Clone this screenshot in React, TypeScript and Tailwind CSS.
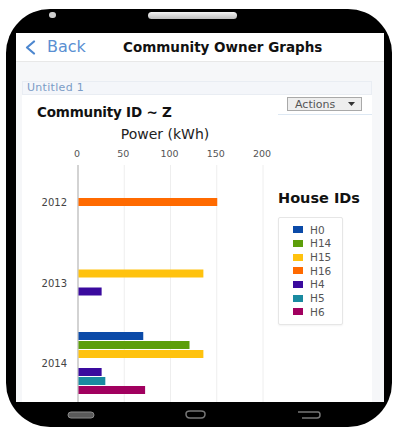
import React from "react";

const series = [
  { id: "H0", color: "#0b4aa8" },
  { id: "H14", color: "#5c9e0a" },
  { id: "H15", color: "#ffc20e" },
  { id: "H16", color: "#ff6a00" },
  { id: "H4", color: "#3a0a9e" },
  { id: "H5", color: "#1a8aa0" },
  { id: "H6", color: "#a1005f" },
];

// values per year, in series order
const data: { year: string; values: number[] }[] = [
  { year: "2012", values: [0, 0, 0, 150, 0, 0, 0] },
  { year: "2013", values: [0, 0, 135, 0, 25, 0, 0] },
  { year: "2014", values: [70, 120, 135, 0, 25, 29, 72] },
];

const X0 = 56;
const SCALE = 0.925;
const GROUP_TOP = 46;
const GROUP_STEP = 80.5;
const SLOT = 9;

function Chart() {
  const ticks = [0, 50, 100, 150, 200];
  return (
    <svg width="248" height="277" className="block shrink-0 overflow-visible" style={{ fontFamily: "'DejaVu Sans', sans-serif" }}>
      <text x="143" y="14" textAnchor="middle" fontSize="14" fill="#222">
        Power (kWh)
      </text>
      {ticks.map((t) => {
        const x = X0 + t * SCALE;
        return (
          <g key={t}>
            <text x={x - 1} y="32" textAnchor="middle" fontSize="9.5" fill="#555">
              {t}
            </text>
            {t > 0 && <line x1={x} y1="40" x2={x} y2="277" stroke="#eeeeee" strokeWidth="1" />}
          </g>
        );
      })}
      <line x1={X0} y1="40" x2={X0} y2="277" stroke="#c4c4c4" strokeWidth="1.5" />
      {data.map((d, gi) => {
        const top = GROUP_TOP + gi * GROUP_STEP;
        return (
          <g key={d.year}>
            <text x="45" y={top + 35} textAnchor="end" fontSize="10" fill="#444">
              {d.year}
            </text>
            {d.values.map((v, si) =>
              v > 0 ? (
                <rect
                  key={si}
                  x={X0 + 0.5}
                  y={top + si * SLOT}
                  width={v * SCALE}
                  height={8}
                  fill={series[si].color}
                />
              ) : null
            )}
          </g>
        );
      })}
    </svg>
  );
}

function Legend() {
  return (
    <div className="flex flex-col pt-[60px]">
      <div className="bg-white h-[27px] pl-[8px] mr-[-12px] flex items-center text-[14.5px] font-bold text-[#111]">
        House IDs
      </div>
      <div className="ml-[8px] mt-[5px] w-[65px] border border-[#e6e6e6] rounded-[2px] bg-white py-[5px] shadow-[0_1px_2px_rgba(0,0,0,0.05)]">
        {series.map((s) => (
          <div key={s.id} className="h-[13.7px] flex items-center pl-[14px] gap-[7px]">
            <span className="w-[10px] h-[7px] shrink-0" style={{ backgroundColor: s.color }} />
            <span className="text-[10.5px] text-[#555] leading-none">{s.id}</span>
          </div>
        ))}
      </div>
    </div>
  );
}

export default function App() {
  return (
    <div className="w-[411px] h-[435px] bg-white overflow-hidden" style={{ fontFamily: "'DejaVu Sans', sans-serif" }}>
      <div className="relative ml-[6px] mt-[9px] w-[386px] h-[418px] rounded-[44px] bg-black pt-[24px] pl-[10px] pr-[8px] pb-[25px]">
        {/* camera + speaker */}
        <span className="absolute left-[43px] top-[3px] w-[7px] h-[6px] rounded-full bg-[#cfcfcf]" />
        <span className="absolute left-[142px] top-[3px] w-[89px] h-[7px] rounded-full bg-gradient-to-b from-[#f4f4f4] to-[#bdbdbd]" />

        <div className="w-[368px] h-[369px] bg-[#f6f7f9] overflow-hidden flex flex-col">
          <div className="h-[29px] shrink-0 bg-white border-b border-[#e8e8e8] flex items-center">
            <div className="flex items-center pl-[8px] gap-[11px] w-[107px]">
              <svg width="12" height="15" viewBox="0 0 12 15">
                <path d="M10 1.5 L3 7.5 L10 13.5" fill="none" stroke="#4d87cf" strokeWidth="2.2" strokeLinecap="round" strokeLinejoin="round" />
              </svg>
              <span className="text-[16px] text-[#5a8fd2]">Back</span>
            </div>
            <span className="text-[13.5px] font-bold text-[#111]">Community Owner Graphs</span>
          </div>

          <div className="flex-1 pt-[19px] pl-[6px] pr-[12px]">
            <div className="h-[14px] bg-[#f4f6fa] border border-[#e9edf3] flex items-center pl-[4px]">
              <span className="text-[11px] tracking-[0.3px] text-[#7b9cc6]">Untitled 1</span>
            </div>
            <div className="bg-white h-[320px]">
              <div className="h-[30px] flex items-start justify-between">
                <span className="pl-[15px] pt-[9px] text-[13.5px] font-bold text-[#111] leading-[16px] tracking-[-0.2px]">
                  Community ID ~ Z
                </span>
                <div className="flex flex-col items-end">
                  <div className="mt-[2px] mr-[10px] w-[75px] h-[14px] bg-[#eeeeee] border border-[#a9a9a9] flex items-center justify-between pl-[7px] pr-[6px]">
                    <span className="text-[11px] text-[#555] leading-none">Actions</span>
                    <svg width="7" height="4" viewBox="0 0 7 4">
                      <path d="M0 0 L7 0 L3.5 4 Z" fill="#333" />
                    </svg>
                  </div>
                  <div className="mt-[3px] w-[94px] h-[1px] bg-[#dde8f3]" />
                </div>
              </div>
              <div className="flex">
                <Chart />
                <Legend />
              </div>
            </div>
          </div>
        </div>

        {/* nav buttons */}
        <div className="flex items-center h-[25px] pl-[51px] gap-[88px]">
          <svg width="28" height="8" viewBox="0 0 28 8">
            <rect x="1" y="1" width="26" height="6" rx="3" fill="#5a5a5a" stroke="#8a8a8a" strokeWidth="1" />
          </svg>
          <svg width="25" height="9" viewBox="0 0 25 9">
            <path d="M3 4 Q3 1 7 1 L18 1 Q22 1 22 4 Q22 8 18 8 L7 8 Q3 8 3 4 Z" fill="none" stroke="#777" strokeWidth="1.5" />
          </svg>
          <svg width="26" height="9" viewBox="0 0 26 9">
            <path d="M2 2 L22 2 Q24 2 24 5 Q24 8 21 8 L6 8" fill="none" stroke="#777" strokeWidth="1.5" />
          </svg>
        </div>
      </div>
    </div>
  );
}
